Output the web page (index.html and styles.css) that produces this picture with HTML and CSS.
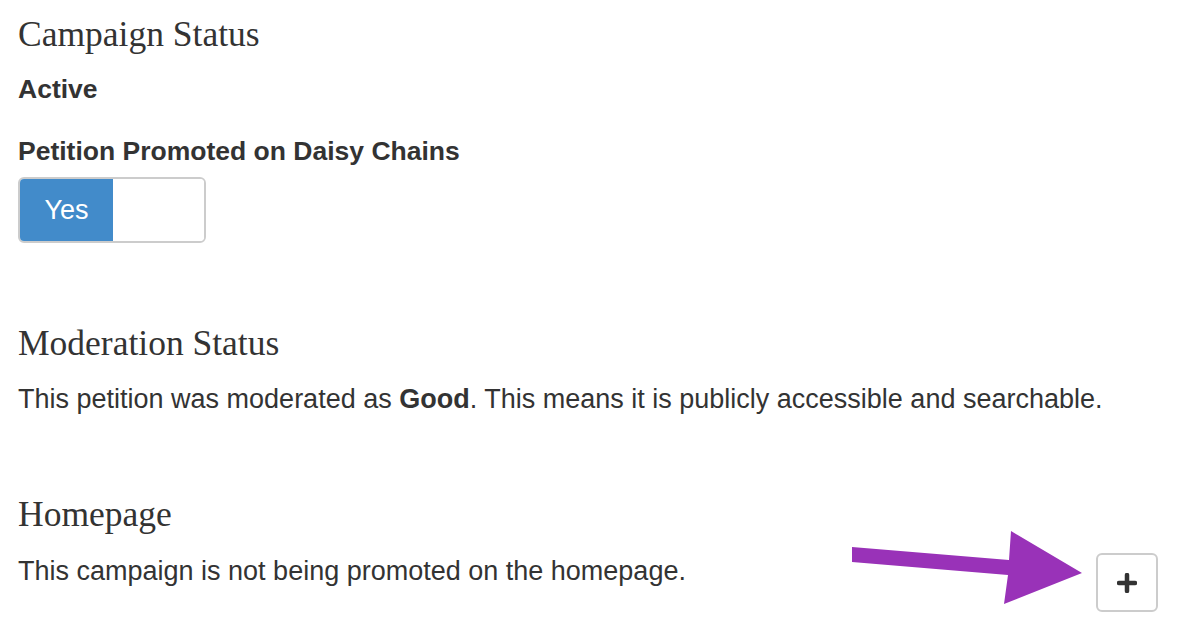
FILE: index.html
```html
<!DOCTYPE html>
<html lang="en">
<head>
	<meta charset="UTF-8">
	<title>Campaign</title>
	<link rel="stylesheet" href="styles.css">
</head>
<body>
<div id="wrap">
	<div class="block">
		<h2>Campaign Status</h2>
		<p class="label first">Active</p>
		<p class="label">Petition Promoted on Daisy Chains</p>
		<div class="toggle"><span class="on">Yes</span><span class="off"></span></div>
	</div>

	<div class="block">
		<h2>Moderation Status</h2>
		<p class="text">This petition was moderated as <b>Good</b>. This means it is publicly accessible and searchable.</p>
	</div>

	<div class="block">
		<h2>Homepage</h2>
		<div class="row">
			<p class="text">This campaign is not being promoted on the homepage.</p>
			<button class="add" type="button">
				<svg width="20" height="20" viewBox="0 0 20 20"><path d="M10 2v16M2 10h16" stroke="#333" stroke-width="4.5" stroke-linecap="round"/></svg>
			</button>
		</div>
	</div>
</div>

<svg class="arrow" width="1190" height="632" viewBox="0 0 1190 632">
	<polygon points="852,547 1009,560 1011,531 1082,573 1004,604 1008,575 852,562" fill="#9932b8"/>
</svg>
</body>
</html>
```

FILE: styles.css
```css
body,p,h2{
	margin:0;
	padding:0;
}
body{
	background:#fff;
	color:#333;
	font-family:"Liberation Sans", Arial, sans-serif;
}
#wrap{
	padding:14px 32px 0 18px;
}
h2{
	font-family:"Liberation Serif", Georgia, serif;
	font-weight:normal;
	font-size:35.5px;
	line-height:40px;
}
.block{
	margin-bottom:80px;
}
.block:last-child{
	margin-bottom:0;
}
.label{
	font-weight:bold;
	font-size:26.5px;
	line-height:30px;
	margin-top:32px;
}
.label.first{
	margin-top:20px;
}
.toggle{
	display:flex;
	width:184px;
	height:62px;
	margin-top:11px;
	border:2px solid #ccc;
	border-radius:6px;
	overflow:hidden;
}
.toggle .on{
	width:93px;
	background:#428bca;
	color:#fff;
	font-size:27px;
	line-height:62px;
	text-align:center;
}
.toggle .off{
	flex:1;
	background:#fff;
}
.text{
	font-size:27px;
	line-height:30px;
	margin-top:21px;
}
.row{
	display:flex;
	justify-content:space-between;
	align-items:flex-start;
	margin-top:19px;
}
.row .text{
	margin-top:3px;
}
.add{
	width:62px;
	height:59px;
	border:2px solid #ccc;
	border-radius:6px;
	background:#fff;
	padding:0;
	display:flex;
	align-items:center;
	justify-content:center;
}
.arrow{
	position:absolute;
	left:0;
	top:0;
	pointer-events:none;
}
```
